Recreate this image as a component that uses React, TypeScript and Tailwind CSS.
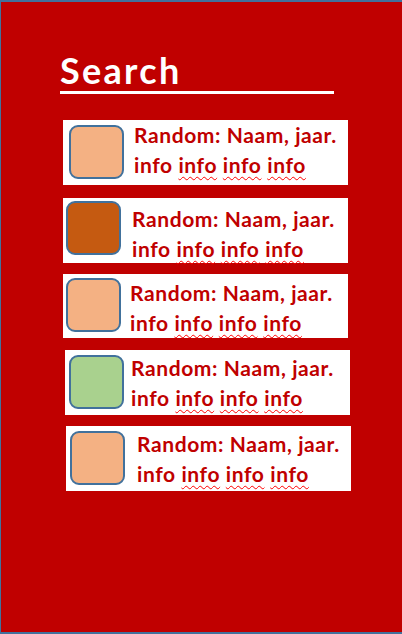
import React from 'react';

interface ResultCard {
  color: string;
  cardClass: string;
  boxClass: string;
  textClass: string;
}

const cards: ResultCard[] = [
  { color: 'bg-[#f4b183]', cardClass: 'mt-[26px] ml-[62px] h-[65px]', boxClass: 'ml-[6px] mt-[5px]', textClass: 'ml-[10px] pt-0' },
  { color: 'bg-[#c55a11]', cardClass: 'mt-[13px] ml-[62px] h-[65px]', boxClass: 'ml-[3px] mt-[3px]', textClass: 'ml-[11px] pt-[6px]' },
  { color: 'bg-[#f4b183]', cardClass: 'mt-[11px] ml-[62px] h-[64px]', boxClass: 'ml-[3px] mt-[4px]', textClass: 'ml-[9px] pt-[4px]' },
  { color: 'bg-[#a9d18e]', cardClass: 'mt-[12px] ml-[64px] h-[65px]', boxClass: 'ml-[4px] mt-[5px]', textClass: 'ml-[7px] pt-[3px]' },
  { color: 'bg-[#f4b183]', cardClass: 'mt-[11px] ml-[65px] h-[65px]', boxClass: 'ml-[4px] mt-[5px]', textClass: 'ml-[12px] pt-[3px]' },
];

const Squiggle: React.FC<{ children: React.ReactNode }> = ({ children }) => (
  <span className="underline decoration-wavy decoration-[#ff0000] decoration-1 underline-offset-[3px]">
    {children}
  </span>
);

export default function App() {
  return (
    <div
      className="w-[402px] h-[634px] bg-[#c00000] border-t-2 border-l border-b-2 border-[#41719c] flex flex-col overflow-hidden"
      style={{ fontFamily: 'Lato, "Open Sans", sans-serif' }}
    >
      <div className="ml-[59px] mt-[47px] w-[274px] border-b-[3px] border-white">
        <span className="block text-white font-bold text-[36px] leading-[42px] tracking-[2.3px]">Search</span>
      </div>

      {cards.map((c, i) => (
        <div key={i} className={`w-[285px] bg-white flex items-start ${c.cardClass}`}>
          <div className={`w-[55px] h-[54px] shrink-0 rounded-[9px] border-2 border-[#41719c] ${c.color} ${c.boxClass}`} />
          <div className={`text-[#c00000] font-bold text-[21px] leading-[30px] tracking-[0.6px] whitespace-nowrap ${c.textClass}`}>
            <div>Random: Naam, jaar.</div>
            <div>
              info <Squiggle>info</Squiggle> <Squiggle>info</Squiggle> <Squiggle>info</Squiggle>
            </div>
          </div>
        </div>
      ))}
    </div>
  );
}
